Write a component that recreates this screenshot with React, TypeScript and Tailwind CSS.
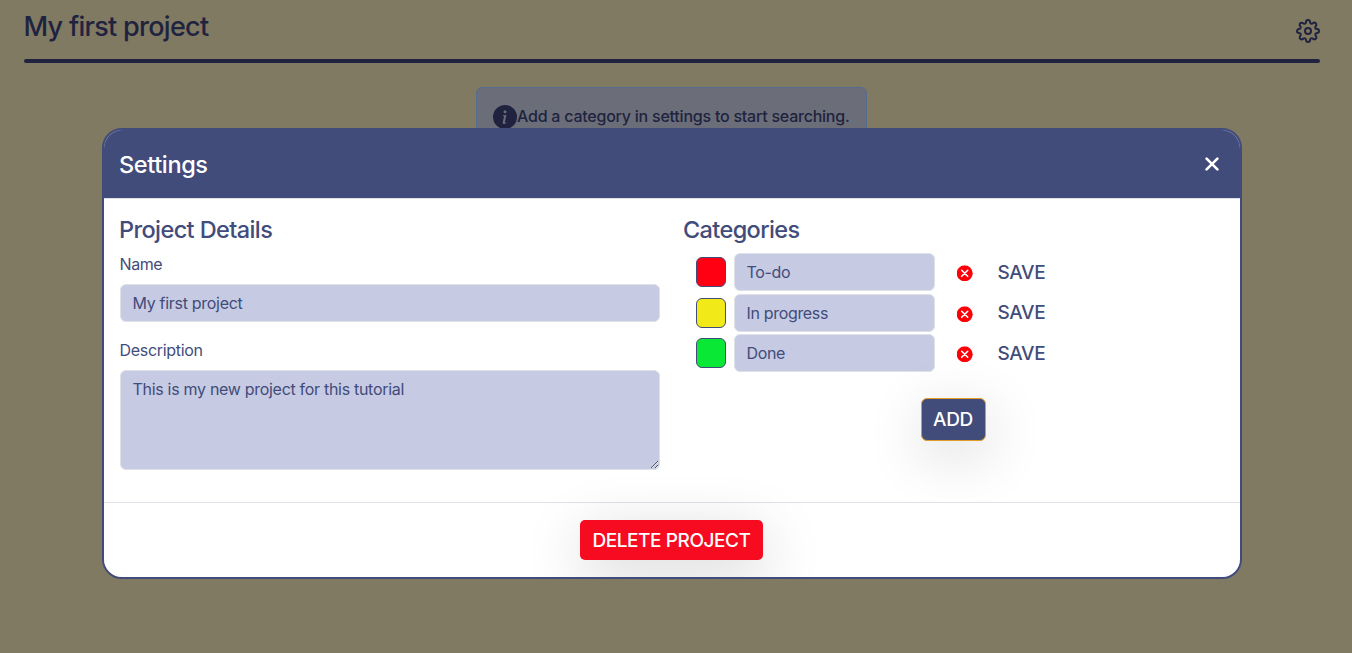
import { BsInfoCircleFill } from "react-icons/bs";
import { FiSettings } from "react-icons/fi";

const categories = [
  { name: "To-do", swatch: "bg-[#ff0013]" },
  { name: "In progress", swatch: "bg-[#f2ea18]" },
  { name: "Done", swatch: "bg-[#0ae836]" },
];

const field =
  "block rounded-md border border-[#dee2e6] bg-[#c6cae3] px-[11.5px] text-[16px] leading-6 text-[#424c7a] outline-none";

function RemoveIcon() {
  return (
    <svg viewBox="0 0 16 16" className="mt-3 ml-[21.5px] h-4 w-4 shrink-0 translate-y-[0.3px]">
      <circle cx="7.7" cy="8" r="8" fill="#ff0008" />
      <path d="M4.7 5 10.7 11M10.7 5 4.7 11" stroke="#fff" strokeWidth="1.6" strokeLinecap="round" />
    </svg>
  );
}

function CategoryRow({ name, swatch }: { name: string; swatch: string }) {
  return (
    <div className="flex h-[40.67px] items-start">
      <div className={`mt-1 h-[30px] w-[30px] shrink-0 rounded-md border border-[#424c7a] ${swatch}`} />
      <input className={`${field} ml-2 h-[38px] w-[201px] tracking-[-0.33px]`} defaultValue={name} />
      <RemoveIcon />
      <button className="mt-[5.6px] ml-[25px] text-[19px] leading-7 font-[450] tracking-[-0.35px] text-[#424c7a]">
        SAVE
      </button>
    </div>
  );
}

export default function App() {
  return (
    <div className="relative h-[653px] w-[1352px] overflow-hidden bg-[#817a62] font-['Inter',sans-serif]">
      <header className="mr-8 ml-[23.5px] flex h-[59px] justify-between text-[#20233f]">
        <h1 className="mt-[10px] text-[27px] leading-[34px] font-medium tracking-[-0.72px]">My first project</h1>
        <FiSettings className="mt-[19px] h-6 w-6" />
      </header>
      <div className="mr-8 ml-6 h-1 rounded-sm bg-[#20233f]" />
      <div className="mt-6 ml-[476px] flex h-[58px] w-[391px] items-center rounded-md border border-[#566c92] bg-[#6b6e79] pl-4 text-[#20233f]">
        <BsInfoCircleFill className="mt-0.5 h-6 w-6 shrink-0" />
        <span className="text-[16px] font-medium tracking-[-0.23px] whitespace-nowrap">
          Add a category in settings to start searching.
        </span>
      </div>

      <div
        role="dialog"
        className="absolute top-[128px] left-[102px] flex h-[451px] w-[1140px] flex-col overflow-hidden rounded-[20px] border-2 border-[#424c7a] bg-[#8e94b2] text-[#424c7a]"
      >
        <div className="flex h-[69px] shrink-0 items-center justify-between rounded-t-[19px] border-b border-[#dee2e6] bg-[#424c7a] pr-[21px] pl-[15px] text-white">
          <h2 className="mt-0.5 text-[23.5px] leading-9 font-medium tracking-[-0.37px]">Settings</h2>
          <svg viewBox="0 0 14 14" className="h-[14px] w-[14px]" fill="none" stroke="currentColor" strokeWidth="2.6" strokeLinecap="round">
            <path d="M1.6 1.6 12.4 12.4M12.4 1.6 1.6 12.4" />
          </svg>
        </div>
        <div className="flex h-[303px] shrink-0 bg-white pt-4 pl-4">
          <section className="w-[540px]">
            <h3 className="-ml-px text-[23.5px] leading-[30px] font-medium tracking-[-0.6px]">Project Details</h3>
            <label className="mt-[7px] -ml-[0.5px] block text-[16px] leading-6 tracking-[-0.4px]">Name</label>
            <input className={`${field} mt-2 h-[38px] w-full tracking-[-0.3px]`} defaultValue="My first project" />
            <label className="mt-4 -ml-[0.5px] block text-[16px] leading-6 tracking-[-0.3px]">Description</label>
            <textarea
              className={`${field} mt-2 h-[100px] w-full resize-y py-1.5 tracking-[-0.3px]`}
              defaultValue="This is my new project for this tutorial"
            />
          </section>
          <section className="ml-6 w-[540px]">
            <h3 className="-ml-px text-[23.5px] leading-[30px] font-medium tracking-[-0.62px]">Categories</h3>
            <div className="mt-2 ml-3">
              {categories.map((c) => (
                <CategoryRow key={c.name} {...c} />
              ))}
            </div>
            <div className="mt-[22.6px] ml-[-2px] flex justify-center">
              <button className="h-[43px] w-[65px] rounded-md border border-[#e29c26] bg-[#424c7a] pt-[2px] text-[19px] font-medium tracking-[-0.25px] text-white shadow-[2px_14px_60px_rgba(0,0,0,0.16)]">
                ADD
              </button>
            </div>
          </section>
        </div>
        <div className="flex h-[75px] shrink-0 justify-center border-t border-[#dee2e6] bg-white pt-[17px] pr-[2px]">
          <button className="h-10 w-[183px] rounded-[5px] bg-[#f60b20] pt-[2px] pl-px text-[19px] font-medium tracking-[-0.42px] whitespace-nowrap text-white shadow-[2px_14px_60px_rgba(0,0,0,0.18)]">
            DELETE PROJECT
          </button>
        </div>
      </div>
    </div>
  );
}
